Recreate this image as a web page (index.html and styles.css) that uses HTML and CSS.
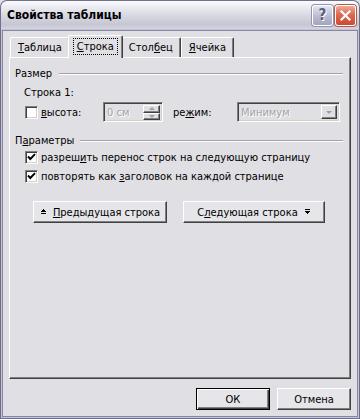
FILE: index.html
```html
<!DOCTYPE html>
<html lang="ru">

<head>
    <meta charset="UTF-8">
    <meta name="viewport" content="width=device-width, initial-scale=1.0">
    <title>Свойства таблицы</title>
    <link rel="stylesheet" href="styles.css">
</head>

<body>
    <div class="window">
        <div class="titlebar">
            <span class="title">Свойства таблицы</span>
            <span class="cap-btn help">?</span>
            <span class="cap-btn close">
                <svg width="13" height="13" viewBox="0 0 13 13"><path d="M2.5 2.5 L10.5 10.5 M10.5 2.5 L2.5 10.5" stroke="#fff" stroke-width="2.2" stroke-linecap="square"/></svg>
            </span>
        </div>
        <div class="client">
            <div class="tabs">
                <div class="tab-header">
                    <span class="tab-item"><u>Т</u>аблица</span>
                    <span class="tab-item active"><span class="focus"><u>С</u>трока</span></span>
                    <span class="tab-item">Стол<u>б</u>ец</span>
                    <span class="tab-item"><u>Я</u>чейка</span>
                </div>
                <div class="tab-pannel">
                    <div class="group-title"><span>Размер</span><i class="rule"></i></div>
                    <div class="row-label">Строка 1:</div>
                    <div class="size-row">
                        <span class="check"></span>
                        <span class="lbl lbl-height"><u>в</u>ысота:</span>
                        <span class="spin">
                            <span class="spin-val">0 см</span>
                            <span class="spin-btns">
                                <b class="spin-b"><i class="tri-up"></i></b>
                                <b class="spin-b"><i class="tri-down"></i></b>
                            </span>
                        </span>
                        <span class="lbl lbl-mode">ре<u>ж</u>им:</span>
                        <span class="combo">
                            <span class="combo-val">Минимум</span>
                            <span class="combo-btn"><i class="tri-down"></i></span>
                        </span>
                    </div>

                    <div class="group-title group-params"><span>П<u>а</u>раметры</span><i class="rule"></i></div>
                    <div class="check-row first">
                        <span class="check"><svg width="9" height="9" viewBox="0 0 9 9"><path d="M1 3.5 L3.3 6 L8 1.2" fill="none" stroke="#000" stroke-width="1.9"/></svg></span>
                        <span class="txt">разреш<u>и</u>ть перенос строк на следующую страницу</span>
                    </div>
                    <div class="check-row">
                        <span class="check"><svg width="9" height="9" viewBox="0 0 9 9"><path d="M1 3.5 L3.3 6 L8 1.2" fill="none" stroke="#000" stroke-width="1.9"/></svg></span>
                        <span class="txt">повторять как <u>з</u>аголовок на каждой странице</span>
                    </div>
                    <div class="nav-row">
                        <button class="btn nav-prev">
                            <svg class="arrow" width="7" height="6" viewBox="0 0 7 6" shape-rendering="crispEdges"><rect x="3" y="0" width="1" height="1"/><rect x="2" y="1" width="3" height="1"/><rect x="1" y="2" width="5" height="1"/><rect x="1" y="4" width="5" height="1"/></svg>
                            <span class="txt"><u>П</u>редыдущая строка</span>
                        </button>
                        <button class="btn nav-next">
                            <span class="txt">С<u>л</u>едующая строка</span>
                            <svg class="arrow" width="7" height="6" viewBox="0 0 7 6" shape-rendering="crispEdges"><rect x="1" y="0" width="5" height="1"/><rect x="1" y="2" width="5" height="1"/><rect x="2" y="3" width="3" height="1"/><rect x="3" y="4" width="1" height="1"/></svg>
                        </button>
                    </div>
                </div>
            </div>
            <div class="footer">
                <button class="btn btn-ok">ОК</button>
                <button class="btn btn-cancel">Отмена</button>
            </div>
        </div>
    </div>
</body>

</html>
```

FILE: styles.css
```css
* {
    box-sizing: border-box;
}

body {
    margin: 0;
    background: #e0dfe3;
    font: 11px "DejaVu Sans Condensed", "DejaVu Sans", sans-serif;
    font-stretch: condensed;
    color: #000;
}

u {
    text-decoration: underline;
    text-underline-offset: 1px;
}

.txt {
    white-space: nowrap;
}

.window {
    width: 360px;
    height: 419px;
    display: flex;
    flex-direction: column;
    background: #e0dfe3;
}

/* заголовок окна */
.titlebar {
    flex: none;
    height: 29px;
    display: flex;
    align-items: center;
    padding: 0 3px 0 6px;
    border: 1px solid #6f6f90;
    border-bottom: none;
    border-radius: 7px 7px 0 0;
    background: linear-gradient(#fbfbfd, #e9e9f0 25%, #d6d6e1 55%, #c6c6d4 85%, #d5d5e1);
}

.title {
    flex: 1;
    font-weight: bold;
    font-size: 12px;
    color: #000;
}

.cap-btn {
    width: 21px;
    height: 21px;
    margin-left: 2px;
    border-radius: 3px;
    border: 1px solid #fff;
    display: flex;
    align-items: center;
    justify-content: center;
}

.help {
    background: linear-gradient(#e4e5ef, #b5b7cd 60%, #a3a5bf);
    box-shadow: 0 0 0 1px #9294b0;
    color: #5c5c7c;
    font-weight: bold;
    font-size: 15px;
    font-stretch: normal;
    text-shadow: 1px 1px #fff;
}

.close {
    background: linear-gradient(#eeaa97, #dc6a52 45%, #cd4a31);
    box-shadow: 0 0 0 1px #b65a48;
}

/* клиентская область */
.client {
    flex: 1;
    display: flex;
    flex-direction: column;
    padding: 6px 8px 8px 8px;
    border: 1px solid #6d6d8d;
    border-top: none;
    box-shadow: inset 0 0 0 1px #c4c4d4, inset 0 0 0 2px #8787a3;
}

.tabs {
    flex: 1;
    display: flex;
    flex-direction: column;
}

.tabs .tab-header {
    display: flex;
    align-items: flex-end;
    height: 22px;
    padding-left: 1px;
}

.tabs .tab-item {
    height: 20px;
    padding: 0 7px;
    display: flex;
    align-items: center;
    border-left: 1px solid #fff;
    border-top: 1px solid #fff;
    border-right: 1px solid #404040;
    border-radius: 2px 2px 0 0;
    box-shadow: inset -1px 0 #808080;
}

.tabs .tab-item.active {
    position: relative;
    z-index: 1;
    height: 23px;
    margin: 0 -2px -1px;
    padding: 0 6px 2px;
    background: #e0dfe3;
}

.tabs .focus {
    padding: 0 2px;
    outline: 1px dotted #000;
    outline-offset: 1px;
}

.tabs .tab-pannel {
    flex: 1;
    padding: 9px 7px 0 0;
    border: 1px solid;
    border-color: #fff #404040 #404040 #fff;
    box-shadow: inset -1px -1px #808080;
}

/* группы */
.group-title {
    display: flex;
    align-items: center;
    gap: 7px;
    height: 13px;
    margin-left: 5px;
}

.group-title .rule {
    flex: 1;
    border-top: 1px solid #a0a0a5;
    border-bottom: 1px solid #fff;
}

.group-params {
    margin-top: 12px;
    gap: 6px;
}

.row-label {
    margin: 6px 0 0 14px;
    height: 13px;
    line-height: 13px;
}

.size-row {
    display: flex;
    align-items: center;
    height: 20px;
    margin: 3px 0 0 15px;
}

.check {
    flex: none;
    width: 13px;
    height: 13px;
    background: #fff;
    border: 1px solid;
    border-color: #808080 #fff #fff #808080;
    box-shadow: inset 1px 1px #404040, inset -1px -1px #d4d0c8;
    display: flex;
    align-items: center;
    justify-content: center;
}

.lbl-height {
    width: 65px;
    padding-left: 3px;
}

.lbl-mode {
    width: 64px;
    margin-left: 10px;
}

.spin,
.combo {
    display: flex;
    height: 20px;
    border: 1px solid;
    border-color: #808080 #fff #fff #808080;
    box-shadow: inset 1px 1px #404040, inset -1px -1px #d4d0c8;
    color: #a3a3a8;
    text-shadow: 1px 1px #fff;
}

.spin {
    width: 60px;
}

.spin-val,
.combo-val {
    flex: 1;
    padding: 3px 0 0 3px;
}

.spin-btns {
    display: flex;
    flex-direction: column;
    padding: 2px 2px 1px 0;
}

.spin-b {
    width: 17px;
    height: 8px;
    display: flex;
    align-items: center;
    justify-content: center;
    border: 1px solid;
    border-color: #fff #404040 #404040 #fff;
    box-shadow: inset -1px -1px #808080;
}

.combo {
    width: 103px;
}

.combo-btn {
    width: 16px;
    margin: 2px 2px 2px 0;
    display: flex;
    align-items: center;
    justify-content: center;
    border: 1px solid;
    border-color: #fff #404040 #404040 #fff;
    box-shadow: inset -1px -1px #808080;
}

.tri-up,
.tri-down {
    width: 0;
    height: 0;
    border-left: 3px solid transparent;
    border-right: 3px solid transparent;
}

.tri-up {
    border-bottom: 3px solid #a0a0a0;
}

.tri-down {
    border-top: 3px solid #a0a0a0;
}

.check-row {
    display: flex;
    align-items: center;
    gap: 3px;
    height: 19px;
    margin-left: 15px;
}

.check-row.first {
    margin-top: 1px;
}

/* кнопки */
.btn {
    font: inherit;
    color: #000;
    height: 22px;
    padding: 0;
    background: #e6e5e9;
    border: 1px solid;
    border-color: #fff #404040 #404040 #fff;
    box-shadow: inset -1px -1px #808080;
    display: flex;
    align-items: center;
    justify-content: center;
    gap: 6px;
}

.nav-row {
    display: flex;
    gap: 16px;
    margin: 15px 0 0 23px;
}

.nav-prev {
    width: 134px;
}

.nav-next {
    width: 142px;
}

.footer {
    display: flex;
    justify-content: flex-end;
    gap: 7px;
    margin-top: 9px;
}

.btn-ok,
.btn-cancel {
    width: 74px;
}

.btn-ok {
    border: 1px solid #000;
    box-shadow: inset 1px 1px #fff, inset -1px -1px #404040, inset -2px -2px #808080;
}
```
